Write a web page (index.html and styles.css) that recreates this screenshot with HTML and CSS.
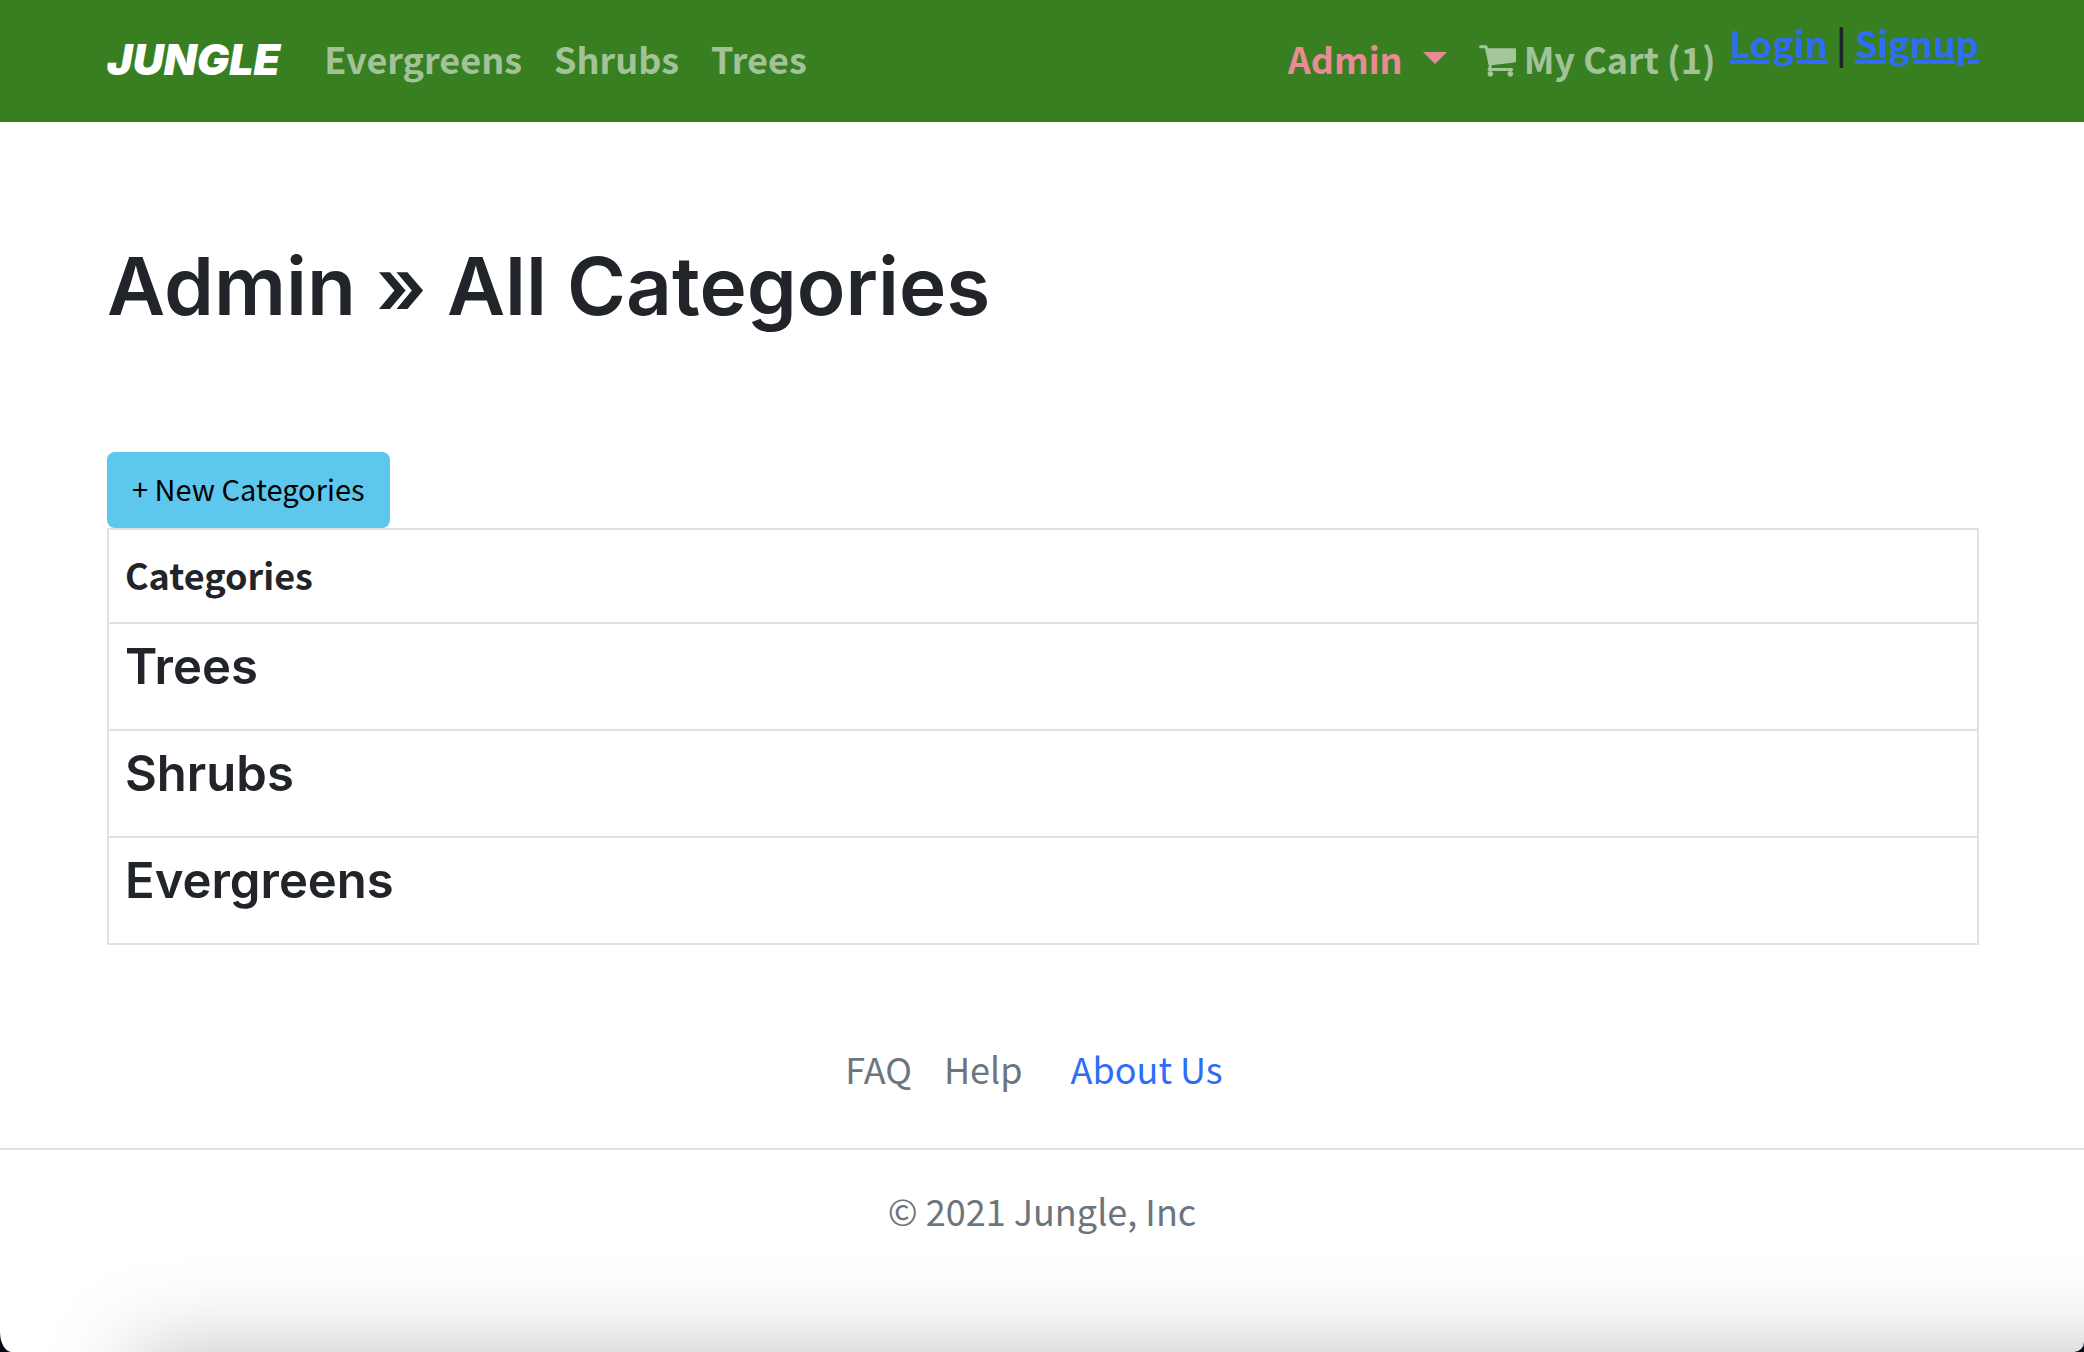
FILE: index.html
```html
<!DOCTYPE html>
<html lang="en">
<head>
  <meta charset="utf-8">
  <meta name="viewport" content="width=device-width, initial-scale=1">
  <title>Jungle</title>
  <link rel="stylesheet" href="styles.css">
</head>
<body>
  <div class="page">
    <header class="navbar">
      <nav class="container navbar-inner">
        <a class="brand" href="#">JUNGLE</a>
        <ul class="nav-links">
          <li><a class="nav-link" href="#">Evergreens</a></li>
          <li><a class="nav-link" href="#">Shrubs</a></li>
          <li><a class="nav-link" href="#">Trees</a></li>
        </ul>
        <div class="nav-end">
          <button class="nav-link admin-toggle" type="button" aria-haspopup="true">Admin<span class="caret"></span></button>
          <a class="nav-link cart-link" href="#">
            <svg class="cart-icon" viewBox="0 256 1664 1408" aria-hidden="true"><path fill="currentColor" d="M640 1536q0 52-38 90t-90 38-90-38-38-90 38-90 90-38 90 38 38 90zm896 0q0 52-38 90t-90 38-90-38-38-90 38-90 90-38 90 38 38 90zm128-1088v512q0 24-16.500 42.500t-40.500 21.500l-1044 122q13 60 13 70 0 16-24 64h920q26 0 45 19t19 45-19 45-45 19h-1024q-26 0-45-19t-19-45q0-11 8-31.500t16-36 21.500-40 15.500-29.500l-177-823h-204q-26 0-45-19t-19-45 19-45 45-19h256q16 0 28.500 6.500t19.500 15.500 13 24.500 8 26 5.500 29.500 4.500 26h1201q26 0 45 19t19 45z"/></svg>
            My Cart (1)
          </a>
          <div class="account"><a href="#">Login</a> | <a href="#">Signup</a></div>
        </div>
      </nav>
    </header>

    <main class="container">
      <h1 class="page-title">Admin » All Categories</h1>
      <a class="btn" href="#">+ New Categories</a>
      <table class="categories">
        <thead>
          <tr><th scope="col">Categories</th></tr>
        </thead>
        <tbody>
          <tr><td>Trees</td></tr>
          <tr><td>Shrubs</td></tr>
          <tr><td>Evergreens</td></tr>
        </tbody>
      </table>
    </main>

    <footer class="footer">
      <ul class="footer-links">
        <li><a class="muted" href="#">FAQ</a></li>
        <li><a class="muted" href="#">Help</a></li>
        <li><a class="about" href="#">About Us</a></li>
      </ul>
      <p class="copyright">© 2021 Jungle, Inc</p>
    </footer>
  </div>
</body>
</html>
```
FILE: styles.css
```css
* {
  box-sizing: border-box;
}

body {
  margin: 0;
  background: #05080f;
  color: #212529;
  font-family: "Noto Sans CJK SC", "Open Sans", sans-serif;
  font-size: 36px;
  line-height: 56px;
}

ul {
  display: flex;
  margin: 0;
  padding: 0;
  list-style: none;
}

.page {
  position: relative;
  min-height: 100vh;
  overflow: hidden;
  background: #fff;
  border-radius: 0 0 10px 12px / 0 0 10px 20px;
}

/* soft shade rising from the bottom edge */
.page::after {
  content: "";
  position: absolute;
  top: 100%;
  left: 134px;
  right: -150px;
  height: 200px;
  box-shadow: 0 0 90px rgba(0, 0, 0, 0.25);
  pointer-events: none;
}

.container {
  width: 100%;
  max-width: 1920px;
  margin: 0 auto;
  padding: 0 23px 0 25px;
}

.navbar {
  padding: 16px 0 22px;
  background: #387f22;
  font-weight: 700;
  line-height: 52px;
}

.navbar-inner {
  display: flex;
  align-items: flex-start;
}

.brand {
  margin-right: 28px;
  padding: 17px 0 15px;
  color: #fff;
  font-family: Inter, sans-serif;
  font-size: 43px;
  font-style: italic;
  font-weight: 900;
  text-decoration: none;
}

.nav-link {
  display: flex;
  align-items: center;
  padding: 16px;
  border: 0;
  background: none;
  color: rgba(255, 255, 255, 0.55);
  font: inherit;
  text-decoration: none;
}

.nav-end {
  display: flex;
  align-items: flex-start;
  margin-left: auto;
}

.admin-toggle {
  color: #e98b95;
}

.caret {
  margin-left: 20px;
  border: 12px solid transparent;
  border-top-color: currentColor;
  border-bottom: 0;
}

.cart-link {
  gap: 8px;
  padding-right: 14px;
}

.cart-icon {
  width: 37px;
  height: 32px;
  margin-top: 6px;
}

.account a {
  color: #2f6df6;
  text-decoration-thickness: 4px;
}

.page-title {
  margin: 118px 0 120px;
  font-family: Inter, sans-serif;
  font-size: 80px;
  font-weight: 600;
  line-height: 92px;
}

.btn {
  display: block;
  width: fit-content;
  padding: 15px 25px 19px;
  border-radius: 8px;
  background: #5dc7ed;
  color: #000;
  font-size: 29px;
  line-height: 42px;
  text-decoration: none;
}

.categories {
  width: 100%;
  border: 2px solid #dee2e6;
  border-collapse: collapse;
  text-align: left;
}

.categories th {
  padding: 16px 16px 20px;
  border: 2px solid #dee2e6;
}

.categories td {
  padding: 15px 16px 34px;
  border: 2px solid #dee2e6;
  font-family: Inter, sans-serif;
  font-size: 49px;
  font-weight: 600;
}

.footer {
  margin-top: 95px;
  text-align: center;
}

.footer-links {
  justify-content: center;
  padding-bottom: 52px;
  border-bottom: 2px solid #dee2e6;
}

.footer a {
  display: block;
  padding: 0 16px;
  text-decoration: none;
}

.footer .muted,
.copyright {
  color: #6c757d;
}

.footer .about {
  padding: 0 32px;
  color: #2f6df6;
}

.copyright {
  margin: 32px 0 0;
}
```
